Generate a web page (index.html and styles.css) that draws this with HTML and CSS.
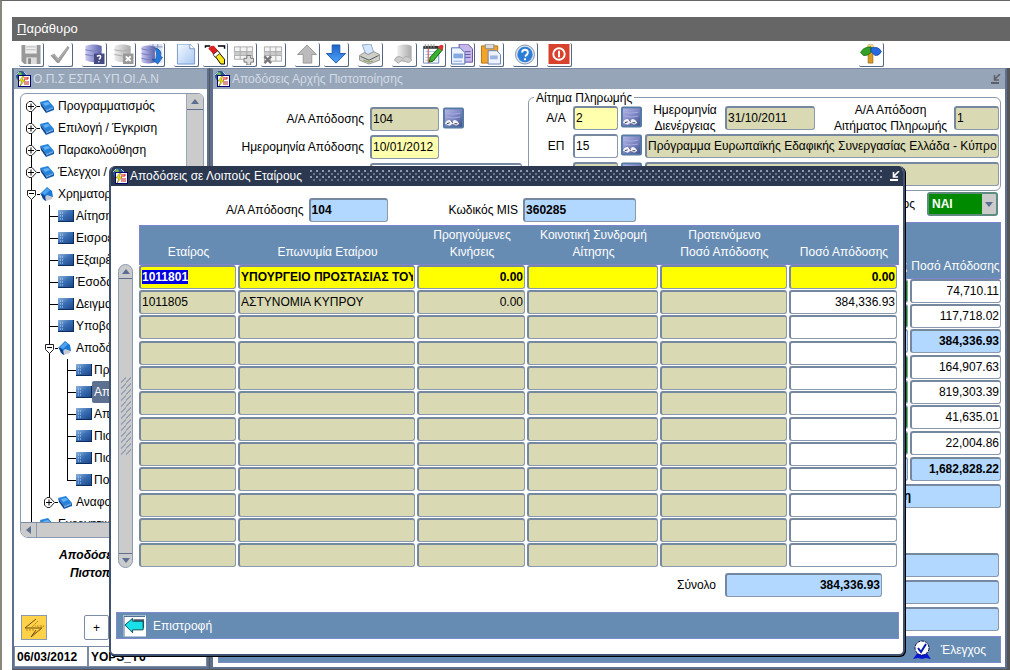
FILE: index.html
```html
<!DOCTYPE html>
<html lang="el">
<head>
<meta charset="utf-8">
<title>Ο.Π.Σ ΕΣΠΑ</title>
<link rel="stylesheet" href="styles.css">
</head>
<body>
<svg class="sprites" aria-hidden="true">
  <defs>
    <linearGradient id="gBlue" x1="0" y1="0" x2="1" y2="1"><stop offset="0" stop-color="#8fb4dc"/><stop offset=".45" stop-color="#3a6fb4"/><stop offset="1" stop-color="#174080"/></linearGradient>
    <linearGradient id="gDb" x1="0" x2="1"><stop offset="0" stop-color="#c9c9f4"/><stop offset="1" stop-color="#5a62a8"/></linearGradient>
    <linearGradient id="gGrey" x1="0" x2="1"><stop offset="0" stop-color="#eee"/><stop offset="1" stop-color="#aaa"/></linearGradient>
    <linearGradient id="gPage" x1="0" y1="0" x2="1" y2="1"><stop offset="0" stop-color="#f4f9ff"/><stop offset="1" stop-color="#a9c8f2"/></linearGradient>
    <linearGradient id="gArrow" x1="0" y1="0" x2="0" y2="1"><stop offset="0" stop-color="#1d62c8"/><stop offset="1" stop-color="#4fa6fa"/></linearGradient>
    <linearGradient id="gLov" x1="0" y1="0" x2="1" y2="1"><stop offset="0" stop-color="#b4b6e6"/><stop offset=".5" stop-color="#7f88c4"/><stop offset="1" stop-color="#3f5288"/></linearGradient>
  </defs>
  <symbol id="app" viewBox="0 0 16 16"><circle cx="6" cy="5" r="5" fill="#26568c"/><path d="M3 2l3-1 1 3-3 3z" fill="#78b848"/><path d="M1 4l3-3M9 1l3 3" stroke="#b8d0ff"/><rect x="3" y="4" width="13" height="12" fill="#000070"/><rect x="4" y="5" width="11" height="10" fill="#fff"/><path d="M9 6h4v3H9z" fill="#f08080"/><path d="M12 7h2M9 11h5M9 13h5" stroke="#c02020"/><path d="M8 5L4 10h3l-2 5 5-6H7l2-4z" fill="#ff0" stroke="#665500" stroke-width=".5"/></symbol>
  <symbol id="book" viewBox="0 0 14 14"><path d="M0 3l8-2 6 7-8 3z" fill="#2583dc"/><path d="M0 3l6 8v3L1 7z" fill="#0c3f86"/><path d="M6 11l8-3v3l-8 3z" fill="#175db0"/><path d="M6 12l7-3" stroke="#8fb8e6"/><path d="M3 4l5-1 2 2-5 2z" fill="#65b2f4"/></symbol>
  <symbol id="open" viewBox="0 0 14 14"><path d="M7 6l6 3-1 3-6 2-4-3z" fill="#c6cad6"/><path d="M1 6l6-6 5 4 1 6-6-2-4 4z" fill="#1b78d4"/><path d="M2 6l5-5 3 2-5 5z" fill="#4ba3f0"/><path d="M0 6l4 7 2 1-1-5z" fill="#0b438c"/></symbol>
  <symbol id="form" viewBox="0 0 16 12"><rect width="16" height="12" fill="url(#gBlue)"/><path d="M0 11.500h16M15.500 0v12" stroke="#0d2d60"/><path d="M2 3h1M4 3h1M2 6h1M4 6h1M2 9h1M4 9h1" stroke="#c0dcfa"/></symbol>
  <symbol id="plus" viewBox="0 0 11 11"><path d="M3 .5h3l4.500 5-4.500 5H3L.5 8V3z" fill="#fff" stroke="#222"/><path d="M2 5.500h6M5 2.500v6" stroke="#000"/></symbol>
  <symbol id="minus" viewBox="0 0 11 11"><path d="M1.500 1.500h8v5l-4 4-4-4z" fill="#fff" stroke="#222"/><path d="M3 4.500h5" stroke="#000"/></symbol>
  <symbol id="up" viewBox="0 0 8 5"><path d="M4 0l4 5H0z" fill="#5c6f91"/></symbol>
  <symbol id="down" viewBox="0 0 8 5"><path d="M0 0h8L4 5z" fill="#5c6f91"/></symbol>
  <symbol id="min" viewBox="0 0 10 10"><path d="M9 0L4 5M3.500 1v5H8" fill="none" stroke="currentColor" stroke-width="1.600"/><path d="M0 9h8" stroke="currentColor" stroke-width="2"/></symbol>
  <symbol id="lov" viewBox="0 0 22 22"><rect width="22" height="22" rx="2" fill="#557aa6"/><rect x="2" y="2" width="18" height="18" fill="url(#gLov)"/><path d="M3 6q8 2 15 0M3 10q8 2 15 0" fill="none" stroke="#a9ace0"/><path d="M2 17q1-4 5-4l2 2 3-2q3 0 5 4-3 3-5 1l-2-1-3 2z" fill="#f2f2f8"/><path d="M4 17l3-1M12 17l3 0M9 14l1 2" stroke="#334"/></symbol>
</svg>
<div class="app">
  <nav class="menubar"><button class="menu" type="button"><u>Π</u>αράθυρο</button></nav>
  <div class="toolbar" role="toolbar">
    <div class="group">
      <button class="tool" type="button" aria-label="Αποθήκευση"><svg viewBox="0 0 22 22"><path d="M1 1h20v20H4l-3-3z" fill="#999"/><path d="M5 1h12v9H5z" fill="#eee"/><path d="M6 3h10M6 6h10" stroke="#bbb"/><path d="M6 14h11v7H6z" fill="#ddd"/><path d="M8 15h3v6H8z" fill="#888"/></svg></button>
      <button class="tool" type="button" aria-label="Επιβεβαίωση"><svg viewBox="0 0 22 22"><path d="M1 12l4-2 4 5L19 2l2 2L10 20H8z" fill="#999"/><path d="M3 12l2-1 4 6L19 4" fill="none" stroke="#bbb"/></svg></button>
    </div>
    <div class="group">
      <button class="tool" type="button" aria-label="Εισαγωγή ερωτήματος"><svg viewBox="0 0 22 22"><path d="M2 2q9-3 17 0v15q-8 4-17 0z" fill="url(#gDb)"/><path d="M2 6q8 3 17 0M2 11q8 3 17 0" stroke="#7379ba" fill="none"/><rect x="11" y="10" width="11" height="11" fill="#454a80"/><path d="M14 13q3-2 4 0 0 2-2 3M16 18v1" stroke="#fff" stroke-width="1.500" fill="none"/></svg></button>
      <button class="tool" type="button" aria-label="Ακύρωση ερωτήματος"><svg viewBox="0 0 22 22"><path d="M2 2q9-3 17 0v15q-8 4-17 0z" fill="url(#gGrey)"/><path d="M2 6q8 3 17 0M2 11q8 3 17 0" stroke="#aaa" fill="none"/><rect x="11" y="10" width="11" height="11" fill="#999"/><path d="M14 13l5 5M19 13l-5 5" stroke="#fff" stroke-width="2"/></svg></button>
      <button class="tool" type="button" aria-label="Εκτέλεση ερωτήματος"><svg viewBox="0 0 22 22"><path d="M8 0h14v20H8z" fill="#dfe5f5"/><path d="M8 3h14M12 0v5M17 0v5" stroke="#8793b8"/><path d="M0 3q7-3 14 0v16q-7 3-14 0z" fill="url(#gDb)"/><path d="M0 5q7 3 14 0M0 10q7 3 14 0M0 15q7 3 14 0" stroke="#7379ba" fill="none"/><path d="M14 4q8 2 6 9l2 1-5 7-6-5h4q2-7-1-12z" fill="#2378dc" stroke="#124a96" stroke-width=".7"/></svg></button>
    </div>
    <div class="group">
      <button class="tool" type="button" aria-label="Νέο"><svg viewBox="0 0 22 22"><path d="M2 0h13l5 5v16H2z" fill="url(#gPage)" stroke="#7897cb"/><path d="M15 0v5h5" fill="#fff" stroke="#7897cb"/></svg></button>
      <button class="tool" type="button" aria-label="Καθαρισμός"><svg viewBox="0 0 22 22"><path d="M1 4V2h5M14 2h7v3" fill="none" stroke="#000" stroke-width="1.500"/><path d="M7 7l4-3 10 12v5h-4z" fill="#f6e51c" stroke="#000"/><path d="M4 5q2-4 6-3l4 5-4 4z" fill="#e02020"/><path d="M9 11l5-4 2 3-5 4z" fill="#fff" stroke="#000" stroke-width=".7"/></svg></button>
      <button class="tool" type="button" aria-label="Εισαγωγή εγγραφής"><svg viewBox="0 0 22 22"><path d="M1 3h19v13H1z" fill="#f4f4f4" stroke="#aaa"/><path d="M1 8h19v4H1z" fill="#ccc"/><path d="M7 3v13M14 3v13M1 8h19M1 12h19" stroke="#aaa"/><path d="M14 12h4v3h3v4h-3v3h-4v-3h-3v-4h3z" fill="#ddd" stroke="#777"/></svg></button>
      <button class="tool" type="button" aria-label="Διαγραφή εγγραφής"><svg viewBox="0 0 22 22"><path d="M2 3h18v15H2z" fill="#f4f4f4" stroke="#aaa"/><path d="M2 8h18v4H2z" fill="#ccc"/><path d="M8 3v15M14 3v15M2 8h18M2 12h18" stroke="#aaa"/><path d="M2 13l7 7M9 13l-7 7" stroke="#777" stroke-width="2.500"/></svg></button>
    </div>
    <div class="group">
      <button class="tool" type="button" aria-label="Προηγούμενη"><svg viewBox="0 0 22 22"><path d="M11 1l10 10h-5v9H7v-9H1z" fill="#bbb" stroke="#999"/></svg></button>
      <button class="tool" type="button" aria-label="Επόμενη"><svg viewBox="0 0 22 22"><path d="M7 1h8v9h6L11 20 1 10h6z" fill="url(#gArrow)" stroke="#1b58ac"/></svg></button>
    </div>
    <div class="group">
      <button class="tool" type="button" aria-label="Εκτύπωση"><svg viewBox="0 0 22 22"><path d="M3 1l9-1 3 9-8 3z" fill="#d5e6ff" stroke="#88a5cc"/><path d="M0 12l5-3 4 2 6-3 6 3v6l-11 4-10-4z" fill="#cfcfca" stroke="#777" stroke-width=".7"/><path d="M1 13l9 4 10-5" fill="none" stroke="#555"/><path d="M4 17l6 2 4-1" fill="none" stroke="#7b9a4c"/></svg></button>
    </div>
    <div class="group">
      <button class="tool" type="button" aria-label="Λίστα τιμών"><svg viewBox="0 0 22 22"><path d="M4 2q8-3 15 0v15q-7 4-15 0z" fill="url(#gGrey)"/><path d="M1 17q1-4 5-4l4 2 3-2q4 0 6 4-3 4-7 1l-3-1-4 3z" fill="#ccc" stroke="#aaa"/></svg></button>
      <button class="tool" type="button" aria-label="Επεξεργασία"><svg viewBox="0 0 22 22"><path d="M1 3h16v17H1z" fill="#fff" stroke="#6b88c0"/><path d="M1 2h16v3H1z" fill="#333"/><path d="M3 0v4M6 0v4M9 0v4M12 0v4" stroke="#999"/><path d="M3 8h12M3 11h12M3 14h12M3 17h12" stroke="#a9c5ea"/><path d="M6 5v15" stroke="#e03030"/><path d="M18 3l3 3L11 18l-4 1 1-5z" fill="#37b32f" stroke="#155c12"/><path d="M16 4q3-5 6-2l-1 5z" fill="#e03030"/></svg></button>
      <button class="tool" type="button" aria-label="Αντιγραφή"><svg viewBox="0 0 22 22"><path d="M8 0h9l5 5v14H8z" fill="#c6b8ea" stroke="#6550a0"/><path d="M14 8h6M14 11h6M14 14h6" stroke="#6550a0"/><path d="M0 4h9l5 5v12H0z" fill="#edf4ff" stroke="#4d70b4"/><path d="M2 10h10v5H2z" fill="#86a8e0"/><path d="M2 18h9" stroke="#86a8e0"/></svg></button>
      <button class="tool" type="button" aria-label="Επικόλληση"><svg viewBox="0 0 22 22"><path d="M1 2h17v18H1z" fill="#f5a42a" stroke="#bb7110"/><path d="M5 0h9v5H5z" fill="#ddd" stroke="#888"/><path d="M8 7h9l4 4v10H8z" fill="#edf2fd" stroke="#6680b8"/><path d="M10 12h8v4h-8z" fill="#9cb4e4"/></svg></button>
    </div>
    <div class="group">
      <button class="tool" type="button" aria-label="Βοήθεια"><svg viewBox="0 0 22 22"><circle cx="11" cy="11" r="10" fill="#d9e2ee" stroke="#8395ad"/><circle cx="11" cy="11" r="8" fill="#2e7ed8"/><path d="M8 9q0-3 3-3t3 3q0 2-3 4" stroke="#fff" stroke-width="2" fill="none"/><path d="M10 15h2v2h-2z" fill="#fff"/></svg></button>
    </div>
    <div class="group">
      <button class="tool" type="button" aria-label="Έξοδος"><svg viewBox="0 0 22 22"><rect width="22" height="21" fill="#d8412c"/><circle cx="11" cy="10.500" r="6" fill="none" stroke="#fff" stroke-width="2"/><path d="M11 7v7" stroke="#fff" stroke-width="2"/></svg></button>
    </div>
    <div class="group group-end">
      <button class="tool" type="button" aria-label="Πλοήγηση"><svg viewBox="0 0 22 22"><path d="M8 1h5v19H8z" fill="#d89a20" stroke="#916010" stroke-width=".7"/><path d="M8 1h5v3H8z" fill="#f4e070"/><path d="M0 9q3-6 11-6v6q-4 4-8 3z" fill="#32a126" stroke="#15600f" stroke-width=".7"/><path d="M11 4q8-2 11 4-3 5-7 4l-4-4z" fill="#276ae0" stroke="#123c98" stroke-width=".7"/></svg></button>
    </div>
  </div>

  <main class="desktop">
    <section class="window nav">
      <header class="titlebar"><svg class="appicon"><use href="#app"/></svg><h2>Ο.Π.Σ ΕΣΠΑ ΥΠ.ΟΙ.Α.Ν</h2></header>
      <div class="nav-body">
        <div class="treebox">
          <div class="treeview">
            <ul class="tree">
              <li><div class="node"><svg class="exp"><use href="#plus"/></svg><i></i><svg class="book"><use href="#book"/></svg><span>Προγραμματισμός</span></div></li>
              <li><div class="node"><svg class="exp"><use href="#plus"/></svg><i></i><svg class="book"><use href="#book"/></svg><span>Επιλογή / Έγκριση</span></div></li>
              <li><div class="node"><svg class="exp"><use href="#plus"/></svg><i></i><svg class="book"><use href="#book"/></svg><span>Παρακολούθηση</span></div></li>
              <li><div class="node"><svg class="exp"><use href="#plus"/></svg><i></i><svg class="book"><use href="#book"/></svg><span>Έλεγχοι /</span></div></li>
              <li><div class="node"><svg class="exp"><use href="#minus"/></svg><i></i><svg class="book"><use href="#open"/></svg><span>Χρηματοροές</span></div>
                <ul>
                  <li><div class="leaf"><i></i><svg class="form"><use href="#form"/></svg><span>Αίτηση</span></div></li>
                  <li><div class="leaf"><i></i><svg class="form"><use href="#form"/></svg><span>Εισροές</span></div></li>
                  <li><div class="leaf"><i></i><svg class="form"><use href="#form"/></svg><span>Εξαιρέσεις</span></div></li>
                  <li><div class="leaf"><i></i><svg class="form"><use href="#form"/></svg><span>Έσοδα</span></div></li>
                  <li><div class="leaf"><i></i><svg class="form"><use href="#form"/></svg><span>Δειγματοληψία</span></div></li>
                  <li><div class="leaf"><i></i><svg class="form"><use href="#form"/></svg><span>Υποβολή</span></div></li>
                  <li><div class="node"><svg class="exp"><use href="#minus"/></svg><i></i><svg class="book"><use href="#open"/></svg><span>Αποδόσεις</span></div>
                    <ul>
                      <li><div class="leaf"><i></i><svg class="form"><use href="#form"/></svg><span>Προτάσεις</span></div></li>
                      <li><div class="leaf selected"><i></i><svg class="form"><use href="#form"/></svg><span>Αποδόσεις</span></div></li>
                      <li><div class="leaf"><i></i><svg class="form"><use href="#form"/></svg><span>Αποδόσεις</span></div></li>
                      <li><div class="leaf"><i></i><svg class="form"><use href="#form"/></svg><span>Πιστώσεις</span></div></li>
                      <li><div class="leaf"><i></i><svg class="form"><use href="#form"/></svg><span>Πιστώσεις</span></div></li>
                      <li><div class="leaf"><i></i><svg class="form"><use href="#form"/></svg><span>Ποσά</span></div></li>
                    </ul></li>
                  <li><div class="node"><svg class="exp"><use href="#plus"/></svg><i></i><svg class="book"><use href="#book"/></svg><span>Αναφορές</span></div></li>
                </ul></li>
              <li><div class="node plain"><svg class="book"><use href="#book"/></svg><span>Ενεργητικό</span></div></li>
            </ul>
            <div class="vscroll"><button type="button" aria-label="Πάνω"><svg class="arrow"><use href="#up"/></svg></button></div>
          </div>
          <div class="hscroll"><button type="button" aria-label="Αριστερά"><svg viewBox="0 0 5 8" class="arrow-side"><path d="M5 0v8L0 4z" fill="#5c6f91"/></svg></button></div>
        </div>
        <p class="current">Αποδόσεις Αρχής<br>Πιστοποίησης</p>
        <div class="nav-buttons">
          <button class="flash" type="button" aria-label="Μετάβαση"><svg viewBox="0 0 24 22"><path d="M14 2L3 11h17L9 20l5-7" fill="none" stroke="#6b4a08"/><path d="M16 4L9 11M4 13h9M12 17l10-8h-9" stroke="#bb7e10" fill="none" stroke-dasharray="2 1"/></svg></button>
          <button class="expand" type="button">+</button>
        </div>
        <div class="status"><output>06/03/2012</output><output>YOPS_Y6</output></div>
      </div>
    </section>

    <section class="window payments">
      <header class="titlebar"><svg class="appicon"><use href="#app"/></svg><h2>Αποδόσεις Αρχής Πιστοποίησης</h2><button class="minimize" type="button" aria-label="Ελαχιστοποίηση"><svg><use href="#min"/></svg></button></header>
      <div class="pay-body">
        <div class="forms">
          <div class="basic">
            <div class="row"><label for="aa">Α/Α Απόδοσης</label><input id="aa" class="field ro w-m" value="104"><button class="lov" type="button" aria-label="Λίστα αποδόσεων"><svg><use href="#lov"/></svg></button></div>
            <div class="row"><label for="date">Ημερομηνία Απόδοσης</label><input id="date" class="field req w-m" value="10/01/2012"></div>
            <div class="row"><input class="field w-l" aria-label="Αρχή Πιστοποίησης"></div>
          </div>
          <fieldset class="request">
            <legend>Αίτημα Πληρωμής</legend>
            <div class="row"><label for="raa">Α/Α</label><input id="raa" class="field req w-s" value="2"><button class="lov" type="button" aria-label="Λίστα αιτημάτων"><svg><use href="#lov"/></svg></button>
              <div class="rest"><label class="two" for="rdate">Ημερομηνία<br>Διενέργειας</label><input id="rdate" class="field ro w-d" value="31/10/2011"><label class="two grow" for="rpay">Α/Α Απόδοση<br>Αιτήματος Πληρωμής</label><input id="rpay" class="field ro w-s" value="1"></div></div>
            <div class="row"><label for="ep">ΕΠ</label><input id="ep" class="field w-s" value="15"><button class="lov" type="button" aria-label="Λίστα προγραμμάτων"><svg><use href="#lov"/></svg></button><input class="field ro fill" aria-label="Πρόγραμμα" value="Πρόγραμμα Ευρωπαϊκής Εδαφικής Συνεργασίας Ελλάδα - Κύπρο"></div>
            <div class="row last"><input class="field ro w-s" aria-label="Άξονας"><button class="lov" type="button" aria-label="Λίστα αξόνων"><svg><use href="#lov"/></svg></button><input class="field ro fill" aria-label="Περιγραφή άξονα"></div>
          </fieldset>
        </div>
        <div class="approve"><label for="final">Έλεγχος</label><span class="combo"><select id="final"><option>ΝΑΙ</option></select><svg class="arrow"><use href="#down"/></svg></span></div>
        <table class="grid totals">
          <colgroup><col><col class="c-flag"><col class="c-amount"></colgroup>
          <thead><tr><th></th><th class="right">Έλεγχος</th><th>Ποσό Απόδοσης</th></tr></thead>
          <tbody>
            <tr><td><input class="field ro" aria-label="Έργο"></td><td><input class="field ok" aria-label="Έλεγχος"></td><td><input class="field num" aria-label="Ποσό" value="74,710.11"></td></tr>
            <tr><td><input class="field ro" aria-label="Έργο"></td><td><input class="field ok" aria-label="Έλεγχος"></td><td><input class="field num" aria-label="Ποσό" value="117,718.02"></td></tr>
            <tr><td><input class="field ro" aria-label="Έργο"></td><td><input class="field calc" aria-label="Έλεγχος"></td><td><input class="field num calc" aria-label="Ποσό" value="384,336.93"></td></tr>
            <tr><td><input class="field ro" aria-label="Έργο"></td><td><input class="field ok" aria-label="Έλεγχος"></td><td><input class="field num" aria-label="Ποσό" value="164,907.63"></td></tr>
            <tr><td><input class="field ro" aria-label="Έργο"></td><td><input class="field ok" aria-label="Έλεγχος"></td><td><input class="field num" aria-label="Ποσό" value="819,303.39"></td></tr>
            <tr><td><input class="field ro" aria-label="Έργο"></td><td><input class="field ok" aria-label="Έλεγχος"></td><td><input class="field num" aria-label="Ποσό" value="41,635.01"></td></tr>
            <tr><td><input class="field ro" aria-label="Έργο"></td><td><input class="field ok" aria-label="Έλεγχος"></td><td><input class="field num" aria-label="Ποσό" value="22,004.86"></td></tr>
          </tbody>
        </table>
        <div class="sum"><input class="field calc w-d" aria-label="Σύνολο"><input class="field num calc w-sum" aria-label="Σύνολο ποσών" value="1,682,828.22"></div>
        <input class="field num calc note" aria-label="Κατάσταση" value="Αρχική Απόδοση">
        <div class="details"><input class="field calc" aria-label="Στοιχεία 1"><input class="field calc" aria-label="Στοιχεία 2"><input class="field calc" aria-label="Στοιχεία 3"></div>
        <div class="actionbar end"><button class="action" type="button"><svg class="badge" viewBox="0 0 20 20"><path d="M1 19l5-7h8l5 7-5-1-4 1-4-1z" fill="#0b18d0"/><circle cx="10" cy="8" r="7" fill="#fff" stroke="#10104c" stroke-dasharray="3 1"/><path d="M6 8l3 4 5-8" fill="none" stroke="#0018b0" stroke-width="2"/></svg>Έλεγχος</button></div>
      </div>
    </section>

    <section class="dialog" role="dialog" aria-labelledby="dlg">
      <header class="titlebar active"><svg class="appicon"><use href="#app"/></svg><h2 id="dlg">Αποδόσεις σε Λοιπούς Εταίρους</h2><span class="grip"></span><button class="minimize" type="button" aria-label="Ελαχιστοποίηση"><svg><use href="#min"/></svg></button></header>
      <div class="dialog-body">
        <div class="keys"><label for="daa">Α/Α Απόδοσης</label><input id="daa" class="field calc w-k1" value="104"><label class="second" for="mis">Κωδικός MIS</label><input id="mis" class="field calc w-k2" value="360285"></div>
        <div class="records">
          <div class="rail"><button type="button" aria-label="Πάνω"><svg class="arrow"><use href="#up"/></svg></button><span class="knurl"></span><button type="button" aria-label="Κάτω"><svg class="arrow"><use href="#down"/></svg></button></div>
          <table class="grid partners">
            <colgroup><col class="p1"><col><col class="p3"><col class="p4"><col class="p5"><col class="p3"></colgroup>
            <thead><tr><th>Εταίρος</th><th>Επωνυμία Εταίρου</th><th>Προηγούμενες<br>Κινήσεις</th><th>Κοινοτική Συνδρομή<br>Αίτησης</th><th>Προτεινόμενο<br>Ποσό Απόδοσης</th><th>Ποσό Απόδοσης</th></tr></thead>
            <tbody id="rows"></tbody>
          </table>
        </div>
        <div class="total"><label for="total">Σύνολο</label><input id="total" class="field num calc w-t" value="384,336.93"></div>
        <div class="actionbar"><button class="action" type="button"><svg class="back" viewBox="0 0 24 22"><path d="M0 0h24v22H0z" fill="#fff"/><path d="M1 22V1h22" fill="none" stroke="#3c5a84"/><path d="M11 4h11v9H11z" fill="#505868"/><path d="M2 10l8-7v3h11v9H10v3z" fill="#19e0e8" stroke="#064c50"/></svg>Επιστροφή</button></div>
      </div>
    </section>
  </main>
</div>
<script src="rows.js"></script>
</body>
</html>
```
FILE: styles.css
```css
* { box-sizing: border-box; }
body, h2, p, ul, fieldset { margin: 0; padding: 0; }
body, button, input, select { font-family: "Liberation Sans", Arial, sans-serif; font-size: 12px; line-height: 16px; color: #000; }
button { padding: 0; border: 0; background: none; }
svg { display: block; flex: none; }
.sprites { position: absolute; width: 0; height: 0; }

.app { height: 100vh; display: flex; flex-direction: column; overflow: hidden; padding: 16px 0 0 10px; border-top: 1px solid #666; border-left: 2px solid #87877c; background: #fff; }
.menubar { height: 24px; flex: none; display: flex; background: #666; padding-left: 5px; }
.menu { color: #fff; font-size: 13px; }
.toolbar { height: 27px; flex: none; display: flex; gap: 9px; padding: 2px 126px 0 7px; }
.group { display: flex; gap: 4px; }
.group-end { margin-left: auto; }
.tool { width: 25px; height: 24px; padding: 1px; border-right: 1px solid #536782; border-bottom: 1px solid #536782; border-radius: 2px; }
.tool svg { width: 22px; height: 21px; }

.desktop { flex: 1; min-height: 0; display: flex; gap: 1px; position: relative; background: #555; padding: 0 3px 1px 0; }
.window { display: flex; flex-direction: column; min-height: 0; background: #fff; border: 2px solid #5d7090; border-top: 1px solid #7c8ca5; }
.nav { width: 197px; flex: none; }
.payments { flex: 1; min-width: 0; border-left-width: 3px; }
.titlebar { height: 20px; flex: none; display: flex; align-items: center; background: #97a5b9; color: #d3dbe6; }
.titlebar h2 { font-size: 12px; font-weight: normal; white-space: nowrap; }
.appicon { width: 16px; height: 16px; margin: 0 2px 0 1px; }
.minimize { margin-left: auto; margin-right: 4px; color: #5d6068; }
.minimize svg { width: 10px; height: 10px; }

/* navigation tree */
.nav-body { flex: 1; min-height: 0; display: flex; flex-direction: column; padding: 4px 3px 0 6px; }
.treebox { flex: 1; min-height: 0; display: flex; flex-direction: column; border: 1px solid #8a9ab2; border-radius: 6px 6px 8px 8px; overflow: hidden; }
.treeview { flex: 1; min-height: 0; display: flex; overflow: hidden; }
.tree { flex: 1; min-width: 0; margin-left: 10px; padding-top: 1px; }
.tree ul { padding-left: 18px; }
.tree li { list-style: none; background: linear-gradient(#000, #000) no-repeat 0 0 / 1px 100%; }
.tree > li:first-child { background-position: 0 11px; }
.tree ul > li:last-child { background-size: 1px 11px; }
.node, .leaf { height: 22px; display: flex; align-items: center; white-space: nowrap; }
.node { margin-left: -5px; }
.plain { margin-left: 9px; }
.node i { width: 3px; height: 1px; background: #000; }
.leaf i { width: 9px; height: 1px; background: #000; }
.exp { width: 11px; height: 11px; }
.book { width: 14px; height: 14px; }
.form { width: 16px; height: 12px; }
.node span { padding-left: 4px; }
.leaf span { padding: 3px 2px; }
.selected span { background: #5d7090; color: #fff; border-radius: 2px; }
.vscroll { width: 17px; background: #cbcbcb; border-left: 1px solid #9ba8bb; }
.vscroll button { width: 16px; height: 16px; display: grid; place-items: center; border-bottom: 1px solid #5d7090; }
.arrow { width: 8px; height: 5px; }
.hscroll { height: 15px; flex: none; background: #cbcbcb; border-top: 1px solid #7c8ca5; }
.hscroll button { width: 16px; height: 14px; display: grid; place-items: center; border-right: 1px solid #8a9ab2; }
.arrow-side { width: 5px; height: 8px; }
.current { padding: 8px 4px 33px 0; text-align: center; font-weight: bold; font-style: italic; line-height: 18px; }
.nav-buttons { display: flex; gap: 37px; padding-left: 1px; }
.flash { width: 26px; height: 25px; background: #ffd24a; border: 1px solid #8a9ab2; }
.flash svg { width: 24px; height: 22px; }
.expand { width: 25px; height: 25px; border: 1px solid #7c8ca5; border-radius: 2px; background: #fff; }
.status { display: flex; margin: 6px -3px 0 -6px; font-weight: bold; }
.status output { height: 21px; padding: 2px; border: 1px solid #7c8ca5; }
.status output:first-child { width: 74px; }
.status output:last-child { flex: 1; }

/* fields */
.field { height: 24px; width: 100%; min-width: 0; padding: 0 1px 1px; border: 1px solid #8a99ad; border-top: 2px solid #7687a0; border-left: 2px solid #7687a0; border-radius: 3px; background: #fff; outline: 0; }
.ro { background: #d9d9b3; }
.req { background: #ffffae; }
.calc { background: #b2d8ff; font-weight: bold; }
.ok { background: #008a00; }
.num { text-align: right; }
.w-s { width: 45px; }
.w-m { width: 69px; }
.w-d { width: 90px; }
.w-l { width: 152px; }
.w-sum { width: 91px; }
.w-k1 { width: 79px; }
.w-k2 { width: 113px; }
.w-t { width: 157px; }
.fill { flex: 1; }
.lov svg { width: 21px; height: 22px; }

/* payment window */
.pay-body { flex: 1; min-height: 0; display: flex; flex-direction: column; padding: 1px 4px 4px 5px; }
.forms { display: flex; gap: 6px; }
.basic { width: 304px; flex: none; padding-top: 17px; }
.row { height: 28px; display: flex; align-items: flex-start; gap: 3px; }
.row > label { line-height: 24px; text-align: right; white-space: nowrap; }
.basic label { width: 146px; margin-right: 3px; }
.basic .lov { margin-left: 1px; }
.basic .field { flex: none; }
.basic .w-l { margin-left: 152px; }
.request { flex: 1; min-width: 0; border: 1px solid #8a99ad; border-radius: 6px; padding: 0 1px; }
.request legend { margin-left: 4px; padding: 0 2px; height: 15px; }
.request .row > label { width: 40px; text-align: center; flex: none; padding-left: 12px; }
.request .row > .w-s { flex: none; }
.request .row:nth-of-type(1) { margin-top: 1px; }
.request .last { padding-left: 43px; }
.rest { flex: 1; min-width: 0; display: flex; }
.two { width: 80px; flex: none; margin: -4px 0; text-align: center; white-space: nowrap; }
.rest .two.grow { flex: 1; padding-left: 12px; }
.rest .field { flex: none; }
.approve { display: flex; justify-content: flex-end; align-items: center; gap: 12px; padding: 1px 3px 0 0; }
.combo { width: 71px; height: 24px; display: flex; align-items: center; background: #cbcbcb; border: 2px solid #5f8a80; border-radius: 3px; }
.combo select { flex: 1; height: 20px; appearance: none; border: 0; padding: 0 3px; background: #008a00; color: #fff; font-weight: bold; }
.combo .arrow { margin: 0 3px; }

.grid { width: 100%; table-layout: fixed; border-collapse: collapse; }
.grid thead { background: #678cb3; outline: 1px solid #7c84cf; outline-offset: -1px; }
.grid th { padding: 0; font-weight: normal; color: #fff; vertical-align: bottom; line-height: 17px; white-space: nowrap; }
.grid td { padding: 0 2px 0 0; height: 25px; vertical-align: top; }
.grid tbody tr:nth-child(3n) td { height: 26px; }
.grid .field { display: block; }
.c-flag { width: 110px; }
.c-amount { width: 91px; }
.totals { margin-top: 6px; }
.totals th { height: 57px; padding-bottom: 4px; }
.totals th.right { text-align: right; padding-right: 3px; }
.totals td:last-child { padding-right: 0; }
.sum { display: flex; justify-content: flex-end; gap: 2px; padding: 1px 0 3px; }
.note { flex: none; padding-right: 89px; }
.details { margin-top: auto; display: flex; flex-direction: column; gap: 3px; padding-right: 2px; }
.actionbar { height: 27px; flex: none; display: flex; align-items: center; background: #678cb3; border: 1px solid #7c8cc8; padding: 0 6px; }
.actionbar.end { margin-top: 5px; justify-content: flex-end; padding-right: 14px; }
.action { display: flex; align-items: center; gap: 7px; color: #fff; }
.end .action { gap: 9px; }
.badge { width: 20px; height: 20px; }
.back { width: 23px; height: 22px; }

/* partner payments dialog */
.dialog { position: absolute; top: 98px; left: 97px; right: 105px; border: 2px solid #3f5270; border-top: 0; border-radius: 6px; background: #fff; box-shadow: 1px 1px 0 #000; overflow: hidden; }
.titlebar.active { background: #2b3850; color: #fff; }
.grip { flex: 1; height: 12px; margin: 0 8px; background: radial-gradient(circle at 1px 1px, #8c9bb0 1px, transparent 1px) 0 0 / 6px 6px, radial-gradient(circle at 4px 4px, #65758f 1px, transparent 1px) 0 0 / 6px 6px; }
.active .minimize { color: #fff; margin-right: 3px; }
.dialog-body { padding: 12px 4px 15px 5px; }
.keys { display: flex; align-items: center; gap: 5px; padding-left: 110px; }
.keys .second { margin-left: 56px; }
.records { display: flex; gap: 6px; margin-top: 3px; }
.rail { width: 15px; flex: none; margin: 39px 0 1px 2px; display: flex; flex-direction: column; justify-content: space-between; align-items: center; background: #cbcbcb; border: 1px solid #8a9ab2; border-radius: 8px; }
.rail button { width: 13px; height: 14px; display: grid; place-items: center; }
.rail button:first-child { border-bottom: 1px solid #5d7090; }
.rail button:last-child { border-top: 1px solid #5d7090; }
.knurl { width: 10px; height: 78px; background: linear-gradient(135deg, transparent 42%, #98a2b2 42% 58%, transparent 58%) 0 0 / 5px 6px; }
.partners th { height: 40px; padding: 0 0 4px; }
.p1 { width: 99px; }
.p3 { width: 110px; }
.p4 { width: 133px; }
.p5 { width: 129px; }
.current-row .field { background: #ff0; font-weight: bold; }
.partners .field::selection { background: #0000e0; color: #fff; }
.total { display: flex; justify-content: flex-end; align-items: center; gap: 9px; padding: 4px 17px 15px 0; }
```
FILE: rows.js
```js
const labels = ["Εταίρος", "Επωνυμία", "Προηγούμενες κινήσεις", "Κοινοτική συνδρομή", "Προτεινόμενο ποσό", "Ποσό απόδοσης"];
const records = [
  ["1011801", "ΥΠΟΥΡΓΕΙΟ ΠΡΟΣΤΑΣΙΑΣ ΤΟΥ ΠΟΛΙΤΗ", "0.00", "", "", "0.00"],
  ["1011805", "ΑΣΤΥΝΟΜΙΑ ΚΥΠΡΟΥ", "0.00", "", "", "384,336.93"]
];
const body = document.getElementById("rows");
for (let r = 0; r < 12; r++) {
  const row = body.insertRow();
  if (r === 0) row.className = "current-row";
  labels.forEach((label, c) => {
    const input = document.createElement("input");
    input.className = "field" + (c < 5 ? " ro" : "") + (c > 1 ? " num" : "");
    input.setAttribute("aria-label", label);
    input.value = (records[r] || [])[c] || "";
    row.insertCell().append(input);
  });
}
const first = body.querySelector("input");
first.focus();
first.select();
```
